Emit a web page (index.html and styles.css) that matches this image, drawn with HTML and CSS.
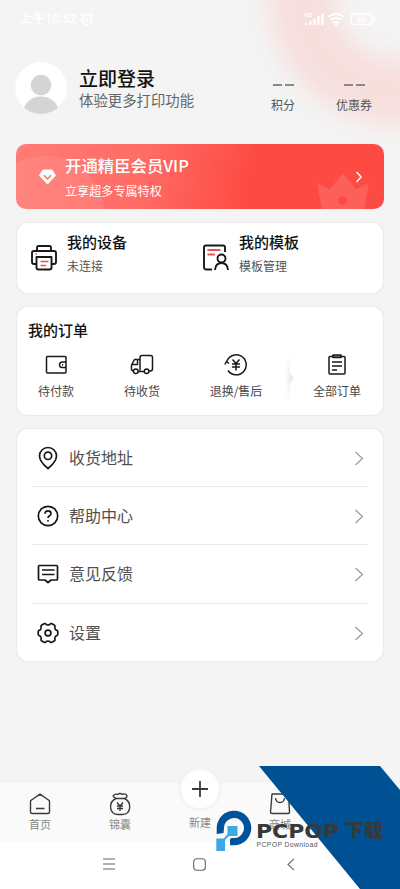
FILE: index.html
```html
<!DOCTYPE html>
<html lang="zh-CN">
<head>
<meta charset="utf-8">
<meta name="viewport" content="width=device-width, initial-scale=1">
<title>我的</title>
<link rel="stylesheet" href="styles.css">
</head>
<body>
<div class="screen">
  <svg class="glow" width="160" height="150" viewBox="0 0 160 150">
    <defs><filter id="soft" x="-40%" y="-40%" width="180%" height="180%"><feGaussianBlur stdDeviation="12"/></filter></defs>
    <circle cx="156" cy="-2" r="94" fill="none" stroke="#f7dfdd" stroke-width="66" filter="url(#soft)"/>
  </svg>

  <div class="status">
    <span class="time">上午10:52</span>
    <svg width="14" height="14" viewBox="0 0 14 14" fill="none" stroke="#fff" stroke-width="1.500"><circle cx="7" cy="7.500" r="5"/><path d="M1 3.500 3.500 1M13 3.500 10.500 1M4.500 6.500 7 8.500 9 7"/></svg>
    <svg class="signals" width="74" height="16" viewBox="0 0 74 16">
      <text x="1" y="6" font-size="6" font-weight="700" fill="#fff">HD</text>
      <path d="M3 14v-2M7.500 14v-3.500M11.500 14V8M15.500 14V5M19.500 14V3" stroke="#fff" stroke-width="2.200"/>
      <g fill="none" stroke="#fff" stroke-width="1.800"><path d="M25 6q8-6 16 0M27.500 9q5.500-4 11 0M30 12q3-2 6 0"/><rect x="48" y="3" width="21" height="10.500" rx="3" stroke-width="1.500"/><path d="M71.500 6.500v3.500"/></g>
      <circle cx="33" cy="13.500" r="1.200" fill="#fff"/>
      <text x="54" y="11" font-size="8" font-weight="700" fill="#fff">62</text>
    </svg>
  </div>

  <header class="profile">
    <svg width="52" height="52" viewBox="0 0 52 52"><defs><clipPath id="av"><circle cx="26" cy="26" r="26"/></clipPath></defs><circle cx="26" cy="26" r="26" fill="#fff"/><g clip-path="url(#av)" fill="#d4d4d4"><circle cx="26" cy="23" r="10.300"/><ellipse cx="26" cy="49.500" rx="17.500" ry="15"/></g></svg>
    <div class="who"><div class="name">立即登录</div><div class="desc">体验更多打印功能</div></div>
    <div class="stat points"><div class="dashes"><i></i><i></i></div>积分</div>
    <div class="stat"><div class="dashes"><i></i><i></i></div>优惠券</div>
  </header>

  <section class="vip">
    <svg class="vip-art" width="368" height="65" viewBox="0 0 368 65"><circle cx="29" cy="72" r="60" fill="#fff" fill-opacity=".08"/><path d="M301 39l13 6 13-16 13 16 13-6-5 27h-42z" fill="#fff" fill-opacity=".12"/><circle cx="326.500" cy="56.500" r="4.200" fill="#fb4a43"/></svg>
    <svg class="gem" width="17" height="16" viewBox="0 0 17 16"><path d="M4 1h9l3.500 5.500L8.500 15 .5 6.500z" fill="#fff" stroke="#fff" stroke-linejoin="round"/><path d="M5 6.300 8.500 10 12 6.300" fill="none" stroke="#ff6e67" stroke-width="1.500"/></svg>
    <div class="vip-copy"><div class="vip-title">开通精臣会员VIP</div><div class="vip-sub">立享超多专属特权</div></div>
    <svg class="vip-arrow" width="8" height="12" viewBox="0 0 8 12" fill="none" stroke="#fff" stroke-width="1.400"><path d="M1.500 1l4.700 5-4.700 5"/></svg>
  </section>

  <section class="card pair">
    <div class="tile">
      <svg width="28" height="28" viewBox="0 0 28 28" fill="none" stroke="#191919" stroke-width="1.900" stroke-linejoin="round"><path d="M7 7V3.500Q7 2 8.500 2h11Q21 2 21 3.500V7"/><path d="M6 20H4Q2 20 2 18V9Q2 7 4 7h20q2 0 2 2v9q0 2-2 2h-2"/><path d="M6.500 13h15v10.500q0 2-2 2h-11q-2 0-2-2z"/><path d="M10.500 17.500h8M10.500 21.500h5.500M5.500 10h1.500" stroke="#ef5350" stroke-width="1.600"/></svg>
      <div><div class="tile-title">我的设备</div><div class="tile-sub">未连接</div></div>
    </div>
    <div class="tile">
      <svg width="28" height="28" viewBox="0 0 28 28" fill="none" stroke="#191919" stroke-width="1.900" stroke-linejoin="round"><path d="M10 25.500H4.500Q2 25.500 2 23V3.500Q2 1.500 4 1.500h17q2 0 2 2V8"/><circle cx="19.500" cy="14.500" r="4"/><path d="M13 26q.5-7 6.500-7t6.500 7"/><path d="M5.500 6h13M5.500 10.500h7.500" stroke="#ef5350"/></svg>
      <div><div class="tile-title">我的模板</div><div class="tile-sub">模板管理</div></div>
    </div>
  </section>

  <section class="card orders">
    <h2>我的订单</h2>
    <div class="order-row">
      <div class="order"><svg width="24" height="24" viewBox="0 0 24 24"><rect x="2.500" y="3.500" width="19.500" height="16.500" rx="1"/><path d="M22 9h-3.500q-3 0-3 2.800t3 2.700H22"/><path d="M18 11.700h1.200"/></svg>待付款</div>
      <div class="order"><svg width="24" height="24" viewBox="0 0 24 24"><path d="M10 17.500V4.500q0-2 2-2h8.500q2 0 2 2v11q0 2.500-2 2.500H19M14 18.500H8M3.500 18Q1.500 18 1.500 16v-4l3-5.500H10M2 11.500h5.500V7"/><circle cx="5.800" cy="18.300" r="2.300"/><circle cx="16.600" cy="18.300" r="2.300"/></svg>待收货</div>
      <div class="order wide"><svg width="24" height="24" viewBox="0 0 24 24"><path d="M2.500 9.500A10 10 0 1 1 4 17.500M.8 11.500l1.700-3L5 10.500"/><path d="M8.500 6.500l3.500 4 3.500-4M8 11h8M8 14h8M12 10.500v7"/></svg>退换/售后</div>
      <svg class="fold" width="10" height="50" viewBox="0 0 10 50"><defs><linearGradient id="fade" x2="0" y2="1"><stop stop-color="#eee" stop-opacity="0"/><stop offset=".5" stop-color="#ebebeb"/><stop offset="1" stop-color="#eee" stop-opacity="0"/></linearGradient><linearGradient id="side"><stop stop-color="#fff"/><stop offset="1" stop-color="#fff" stop-opacity="0"/></linearGradient></defs><path d="M0 0h5v50H0z" fill="url(#fade)"/><path d="M0 0h5v50H0z" fill="url(#side)"/><path d="M5 20l4 5-4 5z" fill="#ebebeb"/></svg>
      <div class="order all"><svg width="24" height="24" viewBox="0 0 24 24"><rect x="4" y="3.500" width="16" height="17.500" rx="1"/><rect x="8" y="2" width="8" height="2.500" fill="#777"/><path d="M7 9h10M7 13h10M7 17h5"/></svg>全部订单</div>
    </div>
  </section>

  <section class="card menu">
    <div class="item"><svg class="mi" width="24" height="24" viewBox="0 0 24 24"><path d="M12 22.500Q3.500 15.500 3.500 10a8.500 8.500 0 0 1 17 0q0 5.500-8.500 12.500z"/><circle cx="12" cy="9.800" r="3.700"/></svg><span>收货地址</span><svg class="chev" width="10" height="15" viewBox="0 0 10 15"><path d="M1.500 1l7 6.500-7 6.500"/></svg></div>
    <div class="item"><svg class="mi" width="24" height="24" viewBox="0 0 24 24"><circle cx="12" cy="12" r="9.700"/><path d="M9 9.800q0-3 3-3t3 2.600q0 1.500-1.500 2.300-1.500.8-1.500 2.300M12 16v1.500"/></svg><span>帮助中心</span><svg class="chev" width="10" height="15" viewBox="0 0 10 15"><path d="M1.500 1l7 6.500-7 6.500"/></svg></div>
    <div class="item"><svg class="mi" width="24" height="24" viewBox="0 0 24 24"><path d="M3.500 3.500h17q1 0 1 1v12.500q0 1-1 1H15l-3 2.500L9 18H3.500q-1 0-1-1V4.500q0-1 1-1z"/><path d="M6 8h12.500M6 12.500h12.500"/></svg><span>意见反馈</span><svg class="chev" width="10" height="15" viewBox="0 0 10 15"><path d="M1.500 1l7 6.500-7 6.500"/></svg></div>
    <div class="item"><svg class="mi" width="24" height="24" viewBox="0 0 24 24"><path d="M8 2.800q1.500-.8 2.200.7 1.800 1 3.600 0 .7-1.500 2.200-.7l2.500 1.500q1 .7.300 2.200 0 1.800 1.500 2.700 1.500.3 1.500 1.500v2.600q0 1.200-1.500 1.500-1.500.9-1.500 2.700.7 1.500-.3 2.200L16 21.200q-1.500.8-2.200-.7-1.800-1-3.600 0-.7 1.500-2.200.7l-2.500-1.500q-1-.7-.3-2.200 0-1.800-1.500-2.700-1.500-.3-1.500-1.500v-2.600q0-1.200 1.500-1.500 1.500-.9 1.500-2.700-.7-1.500.3-2.200z"/><circle cx="12" cy="12" r="2.900"/></svg><span>设置</span><svg class="chev" width="10" height="15" viewBox="0 0 10 15"><path d="M1.500 1l7 6.500-7 6.500"/></svg></div>
  </section>

  <nav class="tabs">
    <div class="tab"><svg width="24" height="24" viewBox="0 0 24 24"><path d="M2.500 9.500Q2.500 8.500 3.500 8L12 2.200 20.500 8q1 .5 1 1.500V20q0 1.500-1.500 1.500H4Q2.500 21.500 2.500 20zM8 16.500h8.500"/></svg>首页</div>
    <div class="tab"><svg width="24" height="24" viewBox="0 0 24 24"><path d="M8 6.500C0 10 1 22.500 10 22.500h4.500C23.500 22.500 24 10 16.500 6.500z"/><path d="M8 6.500Q4 4.500 6 3q2-1.500 3.500-.5 2.500-2 5 0 2-1.500 4 .5 1.500 2-2 3.500M9 10.500l3 3.500 3-3.500M9 14h6M9 16.500h6M12 14v5"/></svg>锦囊</div>
    <div class="tab new"><div class="plus"><svg width="18" height="18" viewBox="0 0 18 18"><path d="M9 1v16M1 9h16"/></svg></div>新建</div>
    <div class="tab"><svg width="24" height="24" viewBox="0 0 24 24"><path d="M4 2h16.500l1 18q0 1.500-1.500 1.500H4Q2.500 21.500 2.500 20zM7.500 6q.5 4.500 4.500 4.500T16.500 6"/></svg>商城</div>
    <div class="tab"></div>
  </nav>

  <div class="sysnav">
    <svg width="12" height="12" viewBox="0 0 12 12"><path d="M0 1h12M0 6h12M0 11h12"/></svg>
    <svg width="13" height="13" viewBox="0 0 13 13"><rect x=".7" y=".7" width="11.600" height="11.600" rx="3"/></svg>
    <svg width="12" height="13" viewBox="0 0 12 13"><path d="M9 .8 3 6.500l6 5.700"/></svg>
  </div>

  <svg class="mark" width="190" height="123" viewBox="0 0 190 123">
    <path d="M49 0h121l20 24v99h-40z" fill="#005094"/>
    <path d="M6.700 68V62a17.300 17.300 0 1 1 17.300 17.300H20V73L22 71.800A10 10 0 1 0 14 62L13.500 67z" fill="#00529b"/>
    <path d="M17.500 60h10v10h-8.500l-4 4v11H6.300V72.500h7.500l3.700-4.500z" fill="#3ba9e5"/>
    <text x="46" y="72" font-size="19" textLength="83" lengthAdjust="spacingAndGlyphs" font-weight="700" fill="#383838" class="brand">PCPOP</text>
    <text x="135" y="71" font-size="18.500" textLength="38" font-weight="900" fill="#383838" lengthAdjust="spacingAndGlyphs">下载</text>
    <text x="46.500" y="80.500" font-size="6.800" textLength="61" fill="#555" class="sub">PCPOP Download</text>
  </svg>
</div>
</body>
</html>
```

FILE: styles.css
```css
* { box-sizing: border-box; }
body { margin: 0; background: #f4f4f4; }
svg { display: block; flex: none; }
.screen {
  position: relative;
  display: flex;
  flex-direction: column;
  width: 400px;
  height: 889px;
  overflow: hidden;
  background: #f4f4f4;
  font-family: "Noto Sans CJK SC", sans-serif;
  color: #111;
}
.glow { position: absolute; top: 0; right: 0; }
.status { position: relative; display: flex; align-items: center; height: 38px; padding: 0 23px 0 20px; color: #fff; }
.time { width: 60px; font: 500 12.500px/16px Roboto, "Noto Sans CJK SC", sans-serif; white-space: nowrap; }
.signals { margin-left: auto; font-family: "Liberation Sans", sans-serif; }

.profile { position: relative; display: flex; height: 106px; padding: 24px 16px 0 15px; }
.who { width: 164px; margin-left: 12px; padding-top: 3px; }
.name { font-size: 19px; font-weight: 500; line-height: 25px; }
.desc { font-size: 14.400px; line-height: 20px; color: #666; }
.stat { width: 60px; padding-top: 22px; font-size: 12px; line-height: 18px; color: #555; text-align: center; }
.stat.points { margin-left: 10px; }
.stat + .stat { margin-left: 11px; }
.dashes { display: flex; justify-content: center; gap: 3px; height: 12px; }
.dashes i { width: 9px; height: 1.500px; background: #888; }

.vip {
  position: relative;
  display: flex;
  align-items: center;
  height: 65px;
  margin: 0 16px;
  padding: 0 21px 0 23px;
  border-radius: 10px;
  overflow: hidden;
  background: linear-gradient(100deg, #ff7c76 0%, #ff6b65 35%, #fd4a42 64%, #fd4a42 100%);
  color: #fff;
}
.vip-art { position: absolute; left: 0; top: 0; }
.gem, .vip-copy, .vip-arrow { position: relative; }
.vip-copy { margin-left: 9px; }
.vip-title { font-size: 16.400px; font-weight: 500; line-height: 24px; white-space: nowrap; }
.vip-sub { margin-top: 4px; font-size: 12.100px; line-height: 20px; }
.vip-arrow { margin-left: auto; }

.card { margin: 0 16px; border: 1px solid #ebebeb; border-radius: 12px; background: #fff; box-shadow: 0 0 2px #eaeaea; }
.pair { display: flex; height: 72px; margin-top: 13px; padding: 8px 0 0 13px; }
.tile { display: flex; width: 172px; }
.tile > svg { margin-top: 13px; }
.tile > div { margin-left: 9px; }
.tile-title { font-size: 15px; font-weight: 500; line-height: 22px; }
.tile-sub { margin-top: 3px; font-size: 12px; line-height: 20px; color: #555; }

.orders { height: 110px; margin-top: 12px; padding: 12px 0 0 11px; }
h2 { margin: 0; font-size: 15px; font-weight: 500; line-height: 22px; }
.order-row { display: flex; margin-top: 12px; }
.order { display: flex; flex-direction: column; align-items: center; width: 56px; font-size: 12px; line-height: 18px; color: #484848; white-space: nowrap; }
.order + .order { margin-left: 30px; }
.order svg { margin-bottom: 5px; fill: none; stroke: #191919; stroke-width: 1.500; stroke-linejoin: round; }
.order + .order.wide { width: 58px; margin-left: 37px; }
.fold { margin-left: 20px; }
.order.all { width: 52px; margin-left: 16px; }

.menu { height: 234px; margin-top: 12px; padding: 0 15px; }
.item { display: flex; align-items: center; height: 58.200px; padding: 1px 4px 0; border-bottom: 1px solid #e9e9e9; font-size: 16px; line-height: 24px; color: #505050; }
.item:last-child { border-bottom: 0; }
.mi { fill: none; stroke: #171717; stroke-width: 1.700; stroke-linejoin: round; }
.item span { margin: -2px 0 0 9px; }
.chev { margin-left: auto; fill: none; stroke: #999; stroke-width: 1.200; }

.tabs { display: flex; height: 58px; margin-top: auto; background: #fafafa; }
.tab { display: flex; flex-direction: column; align-items: center; width: 80px; padding-top: 9px; font-size: 11px; line-height: 17px; color: #888; }
.tab svg { fill: none; stroke: #3a3a3a; stroke-width: 1.400; stroke-linejoin: round; }
.new { padding-top: 0; }
.plus { display: grid; place-items: center; width: 42px; height: 42px; margin: -15px 0 4px; border: 2px solid #f5f5f5; border-radius: 50%; background: #fff; box-shadow: 0 0 2px #e8e8e8; }
.plus svg { stroke-width: 1.800; }
.sysnav { display: flex; align-items: center; height: 48px; padding: 0 0 2px 103px; background: #fff; }
.sysnav svg { fill: none; stroke: #666; stroke-width: 1.100; }
.sysnav svg + svg { margin-left: 78px; }
.sysnav svg + svg + svg { margin-left: 79px; }
.mark { position: absolute; left: 210px; top: 766px; }
.brand { font-family: "DejaVu Sans", sans-serif; }
.sub { font-family: "Liberation Sans", sans-serif; }
```
